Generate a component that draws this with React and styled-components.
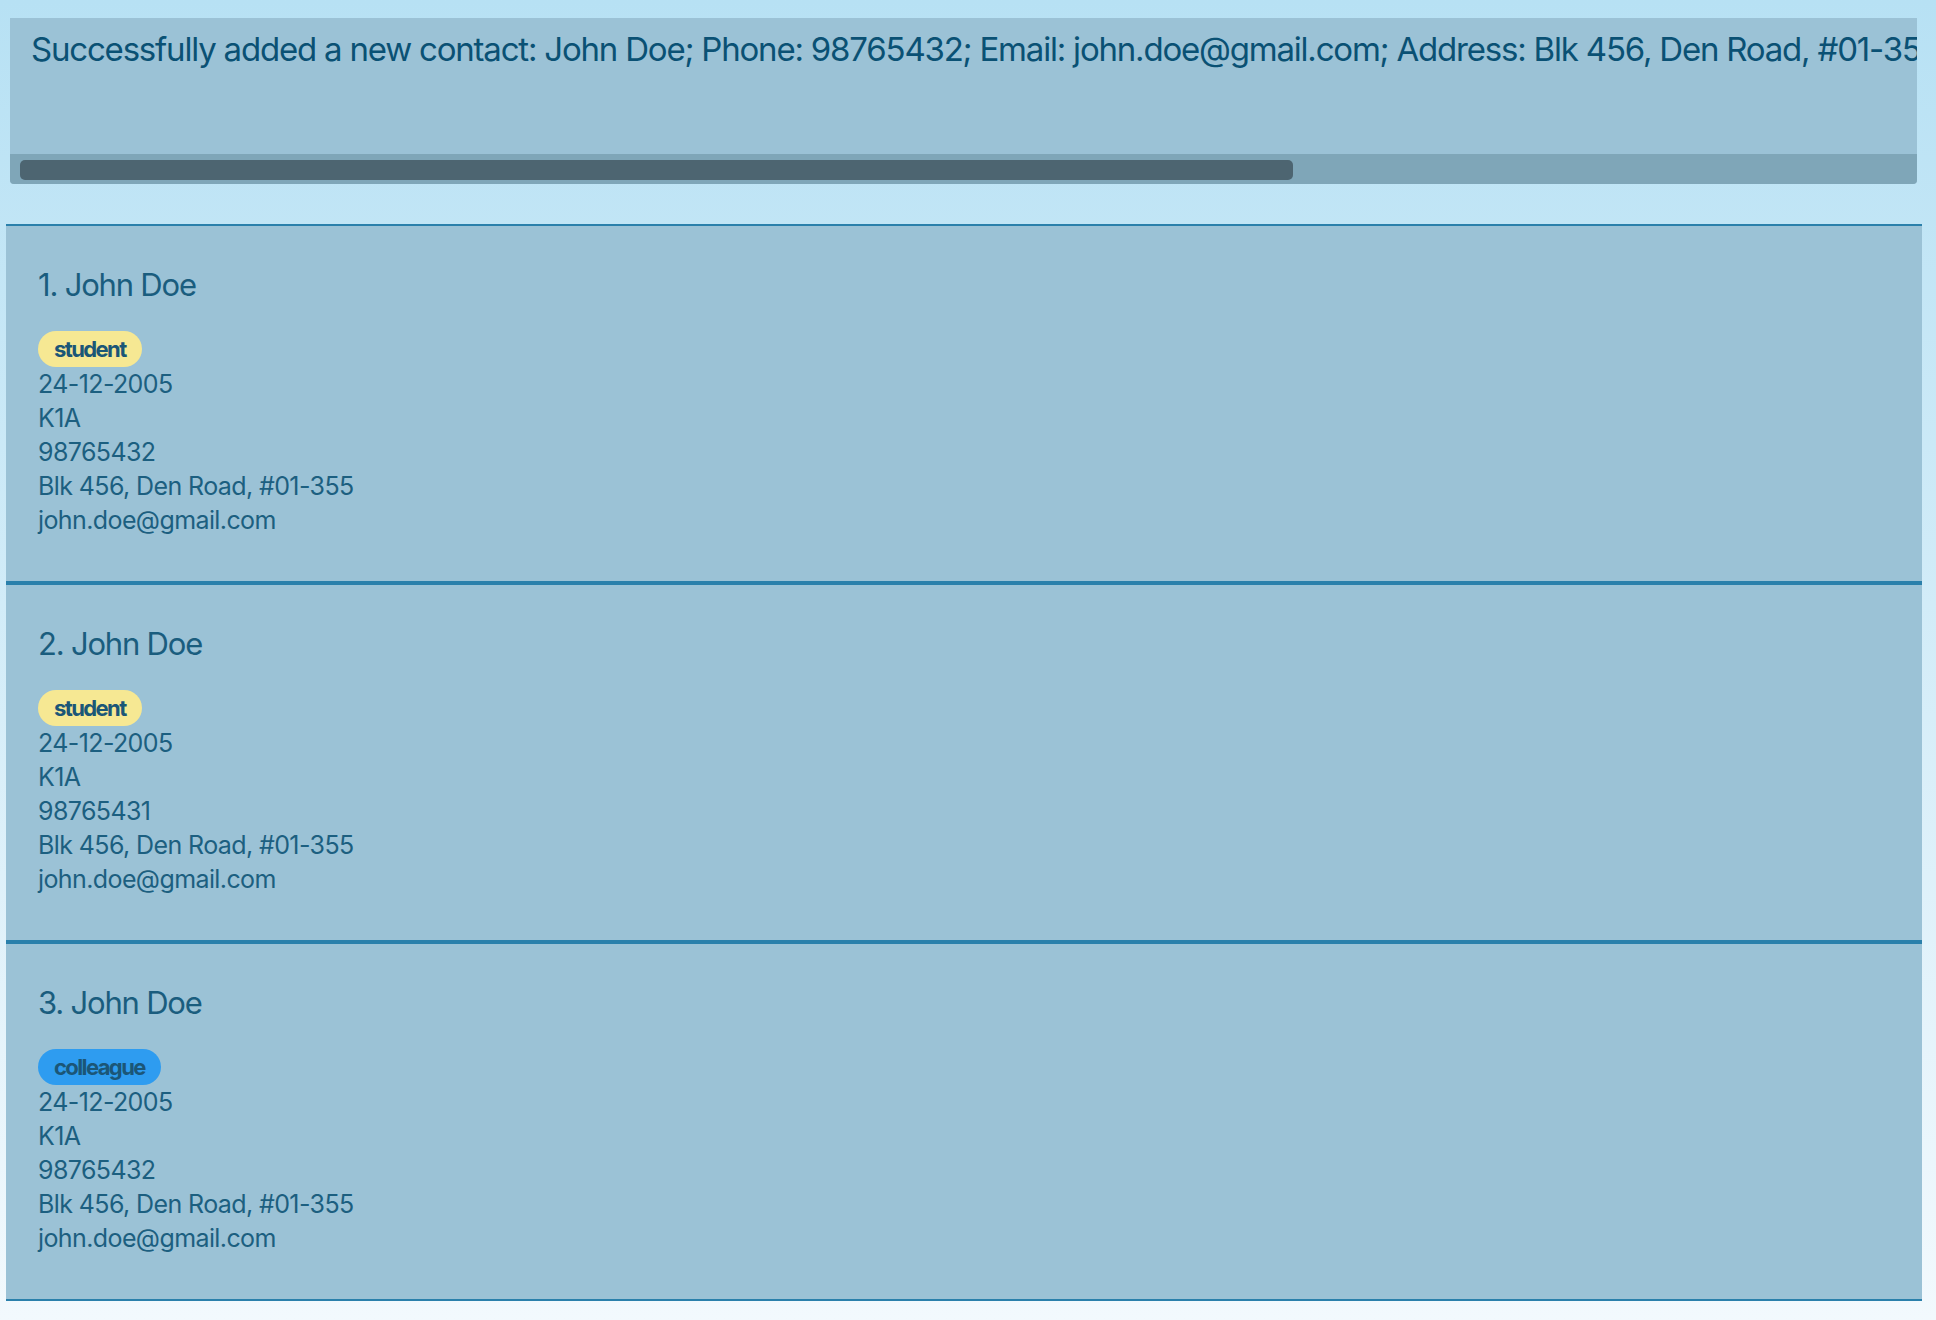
import React from "react";
import styled, { createGlobalStyle } from "styled-components";

const GlobalStyle = createGlobalStyle`
  html, body {
    margin: 0;
    padding: 0;
  }
  body {
    min-height: 1320px;
    background: linear-gradient(180deg, #b7e1f4 0%, #f2f9fd 100%);
    font-family: "Inter", "Noto Sans", "Liberation Sans", sans-serif;
  }
`;

const Page = styled.div`
  display: flex;
  flex-direction: column;
  padding-top: 18px;
  min-height: 1302px;
`;

const ResultBox = styled.section`
  margin: 0 19px 0 10px;
  height: 166px;
  display: flex;
  flex-direction: column;
  background: #9bc2d6;
  border-radius: 0 0 4px 4px;
  overflow: hidden;
`;

const ResultText = styled.div`
  flex: 1;
  padding: 11px 0 0 21px;
  white-space: nowrap;
  overflow: hidden;
  font-size: 33px;
  line-height: 40px;
  letter-spacing: -1.2px;
  color: #0a5174;
`;

const ScrollTrack = styled.div`
  height: 30px;
  box-sizing: border-box;
  padding: 6px 5px 4px 10px;
  background: #7fa6b8;
`;

const ScrollThumb = styled.div`
  height: 20px;
  border-radius: 5px;
  background: #4d6571;
`;

const ContactList = styled.section`
  margin: 40px 14px 0 6px;
  display: flex;
  flex-direction: column;
`;

const Card = styled.article`
  height: 359px;
  box-sizing: border-box;
  border-top: 2px solid #2a80ab;
  border-bottom: 2px solid #2a80ab;
  background: #9bc2d6;
  padding: 40px 32px 0 32px;
  display: flex;
  flex-direction: column;
  align-items: flex-start;
  color: #1b5e7f;
`;

const Name = styled.h2`
  margin: 0 0 27px 0;
  font-size: 31px;
  line-height: 38px;
  font-weight: 400;
  letter-spacing: -1.2px;
  color: #1a5d7e;
`;

const Tag = styled.span`
  height: 36px;
  box-sizing: border-box;
  padding: 0 16px;
  border-radius: 18px;
  display: inline-flex;
  align-items: center;
  font-size: 22px;
  font-weight: 700;
  letter-spacing: -1.6px;
  color: #1b5677;
  background: ${(p) => (p.$kind === "colleague" ? "#2e9cf0" : "#f6e893")};
`;

const Detail = styled.div`
  font-size: 25px;
  line-height: 34px;
  letter-spacing: -0.6px;
  color: #1c5f80;
`;

const contacts = [
  { name: "John Doe", tag: "student", phone: "98765432" },
  { name: "John Doe", tag: "student", phone: "98765431" },
  { name: "John Doe", tag: "colleague", phone: "98765432" },
];

export default function App() {
  const thumbRatio = 0.673;
  return (
    <>
      <GlobalStyle />
      <Page>
        <ResultBox>
          <ResultText>
            Successfully added a new contact: John Doe; Phone: 98765432; Email:
            john.doe@gmail.com; Address: Blk 456, Den Road, #01-355; Birthday:
            24-12-2005; Class: K1A; Tags: [student]
          </ResultText>
          <ScrollTrack>
            <ScrollThumb style={{ width: `${thumbRatio * 100}%` }} />
          </ScrollTrack>
        </ResultBox>
        <ContactList>
          {contacts.map((c, i) => (
            <Card key={i}>
              <Name>
                {i + 1}. {c.name}
              </Name>
              <Tag $kind={c.tag}>{c.tag}</Tag>
              <Detail>24-12-2005</Detail>
              <Detail>K1A</Detail>
              <Detail>{c.phone}</Detail>
              <Detail>Blk 456, Den Road, #01-355</Detail>
              <Detail>john.doe@gmail.com</Detail>
            </Card>
          ))}
        </ContactList>
      </Page>
    </>
  );
}
